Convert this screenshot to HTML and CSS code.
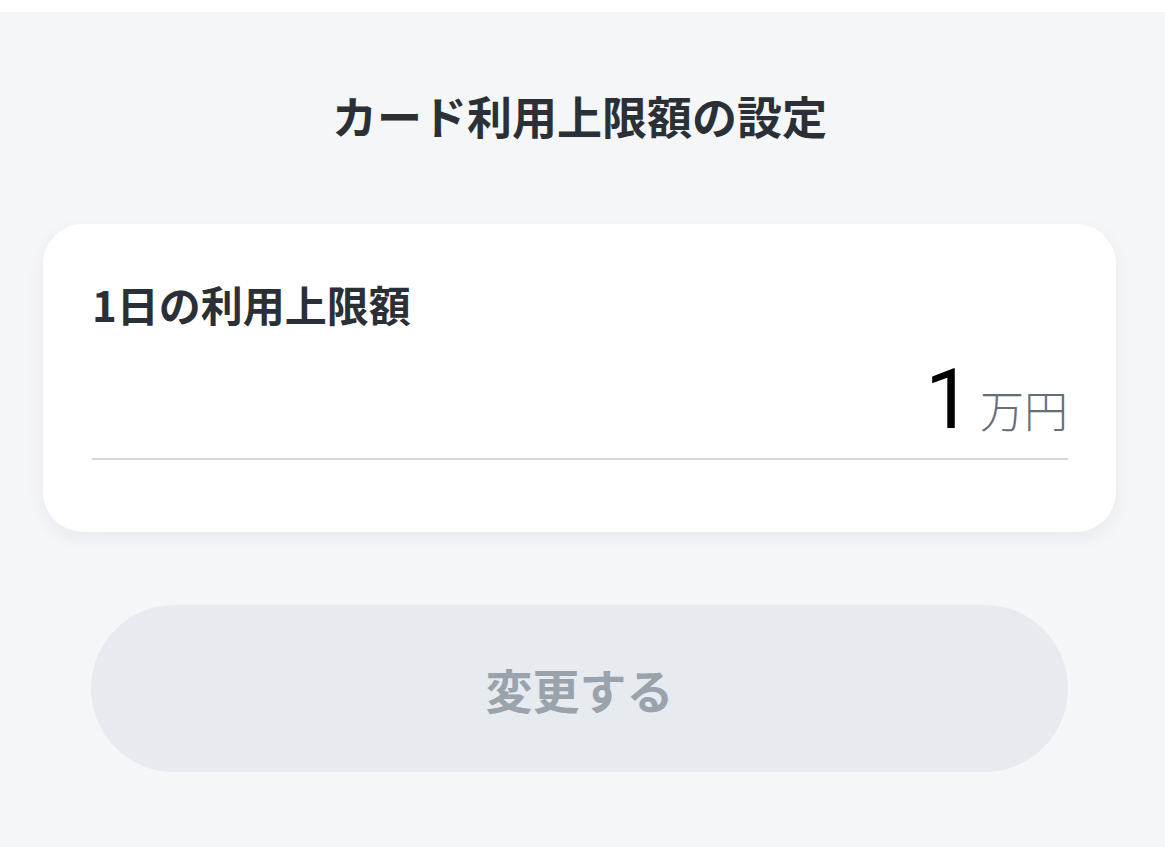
FILE: index.html
```html
<!DOCTYPE html>
<html lang="ja">
  <head>
    <meta charset="UTF-8" />
    <meta name="viewport" content="width=device-width, initial-scale=1.0" />
    <title>カード利用上限額の設定</title>
    <link rel="stylesheet" href="styles.css">
  </head>
  <body>
    <div class="page">
      <h1 class="title">カード利用上限額の設定</h1>

      <div class="card">
        <div class="label">1日の利用上限額</div>
        <div class="amount">
          <span class="amount-value">1</span>
          <span class="amount-unit">万円</span>
        </div>
      </div>

      <button class="submit" disabled>変更する</button>
    </div>
  </body>
</html>
```

FILE: styles.css
```css
/* General Styles */
body {
  font-family: "Noto Sans CJK JP", "Noto Sans", sans-serif;
  background-color: #fff;
  color: #2b3036;
  margin: 0;
  padding: 0;
}

.page {
  margin-top: 12px;
  min-height: 835px;
  background-color: #f5f6f8;
  padding: 72px 49px 0 43px;
  box-sizing: border-box;
}

.title {
  margin: 0;
  font-size: 45px;
  line-height: 64px;
  font-weight: 700;
  text-align: center;
  color: #2b3036;
}

/* Card */
.card {
  margin-top: 76px;
  background-color: #fff;
  border-radius: 40px;
  padding: 52px 48px 72px 49px;
  box-shadow: 0 6px 18px rgba(30, 40, 60, 0.06);
}

.label {
  font-size: 42px;
  line-height: 56px;
  font-weight: 700;
}

.amount {
  display: flex;
  justify-content: flex-end;
  align-items: baseline;
  gap: 8px;
  margin-top: 22px;
  border-bottom: 2px solid #cfd6dd;
  padding-bottom: 12px;
}

.amount-value {
  font-family: Roboto, "Noto Sans", sans-serif;
  font-size: 83px;
  line-height: 92px;
  font-weight: 400;
  color: #000;
}

.amount-unit {
  font-size: 44px;
  font-weight: 300;
  color: #656f7a;
}

/* Button */
.submit {
  display: block;
  width: calc(100% - 96px);
  margin: 73px auto 0;
  height: 167px;
  border: none;
  border-radius: 84px;
  background-color: #e7ebef;
  color: #9aa3ac;
  font-family: inherit;
  font-size: 47px;
  font-weight: 700;
  cursor: not-allowed;
}
```
